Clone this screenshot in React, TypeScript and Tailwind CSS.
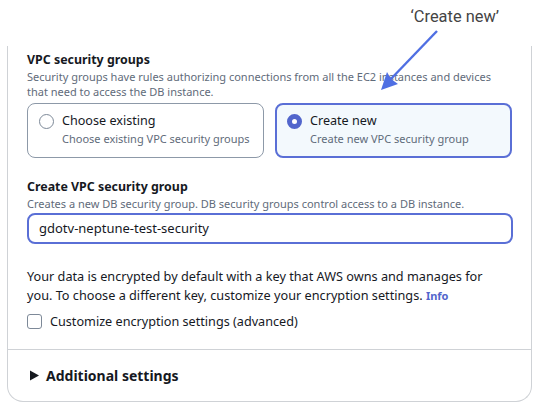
export default function App() {
  const ui = { fontFamily: '"Noto Sans", sans-serif' };
  return (
    <div className="relative w-[536px] h-[406px] bg-white overflow-hidden" style={ui}>
      <div className="h-[46px] flex justify-end pr-[37px] pt-[7px]">
        <span className="text-[16.4px] leading-[20px] text-[#444]" style={{ fontFamily: 'Roboto, sans-serif' }}>‘Create new’</span>
      </div>
      <svg className="absolute left-0 top-0" width="536" height="120" viewBox="0 0 536 120">
        <line x1="437" y1="31" x2="388" y2="82" stroke="#4f6fe3" strokeWidth="2.4" />
        <polygon points="381,90 387,72 391,79 398,84" fill="#4f6fe3" />
      </svg>
      <div className="ml-[7px] w-[525px] h-[356px] border-x border-b border-[#cfd2d6] rounded-b-[16px] flex flex-col">
        <div className="px-[19px] pt-[5px] flex-1">
          <h3 className="text-[12.4px] leading-[18px] font-bold text-[#16191f]">VPC security groups</h3>
          <p className="text-[11px] leading-[15px] text-[#5f6b7a]">Security groups have rules authorizing connections from all the EC2 instances and devices that need to access the DB instance.</p>
          <div className="flex gap-[11px] mt-[4px]">
            <div className="w-[237px] h-[55px] border border-[#8d99a8] rounded-[8px] flex pl-[11px] pt-[8px] gap-[8px]">
              <span className="w-[15px] h-[15px] mt-[2px] rounded-full border border-[#7d8998]" />
              <div>
                <div className="text-[12.6px] leading-[17px] text-[#16191f]">Choose existing</div>
                <div className="text-[11px] leading-[19px] text-[#5f6b7a]">Choose existing VPC security groups</div>
              </div>
            </div>
            <div className="w-[237px] h-[55px] border-2 border-[#5a6fd6] bg-[#f3f9fd] rounded-[8px] flex pl-[10px] pt-[7px] gap-[8px]">
              <span className="w-[15px] h-[15px] mt-[2px] rounded-full border-[5px] border-[#5266cc] bg-white" />
              <div>
                <div className="text-[12.6px] leading-[17px] text-[#16191f]">Create new</div>
                <div className="text-[11px] leading-[19px] text-[#5f6b7a]">Create new VPC security group</div>
              </div>
            </div>
          </div>
          <h3 className="text-[12.4px] leading-[18px] font-bold text-[#16191f] mt-[20px]">Create VPC security group</h3>
          <p className="text-[11px] leading-[15px] text-[#5f6b7a]">Creates a new DB security group. DB security groups control access to a DB instance.</p>
          <div className="w-[486px] h-[31px] mt-[2px] border-2 border-[#5a6fd6] rounded-[8px] pl-[10px] flex items-center text-[13px] text-[#16191f]">gdotv-neptune-test-security</div>
          <p className="text-[12.7px] leading-[19px] mt-[23px] text-[#16191f] w-[470px]">Your data is encrypted by default with a key that AWS owns and manages for you. To choose a different key, customize your encryption settings. <a className="text-[11px] font-bold text-[#5266cc]">Info</a></p>
          <label className="flex items-center gap-[8px] mt-[8px] text-[12.65px] leading-[17px] text-[#16191f]">
            <span className="w-[15px] h-[15px] border border-[#7d8998] rounded-[3px]" />
            Customize encryption settings (advanced)
          </label>
        </div>
        <div className="h-[52px] border-t border-[#cfd2d6] flex items-center pl-[22px] gap-[7px]">
          <svg width="9" height="11" viewBox="0 0 9 11"><polygon points="0,0.5 9,5.5 0,10.5" fill="#16191f" /></svg>
          <span className="text-[14px] font-bold text-[#16191f]">Additional settings</span>
        </div>
      </div>
    </div>
  );
}
